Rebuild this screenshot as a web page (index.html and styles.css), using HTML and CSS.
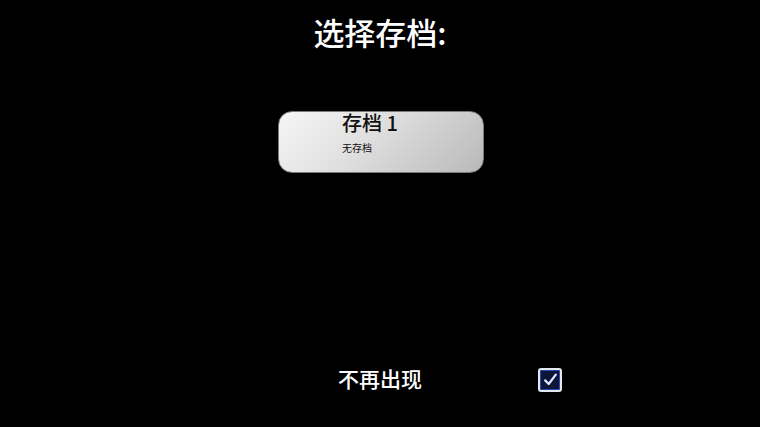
FILE: index.html
```html
<!DOCTYPE html>
<html lang="zh-CN">
<head>
<meta charset="utf-8">
<link rel="stylesheet" href="styles.css">
</head>
<body>
<main class="screen">
  <h1 class="title">选择存档:</h1>
  <div class="slot">
    <div class="slot-name">存档 1</div>
    <div class="slot-info">无存档</div>
  </div>
  <div class="spacer"></div>
  <label class="option">
    <span class="option-text">不再出现</span>
    <span class="checkbox">
      <svg viewBox="0 0 16 16" width="17" height="17">
        <path d="M3 8.8 L6.3 12.2 L13 3.4" fill="none" stroke="#dce8ff" stroke-width="2.1" stroke-linecap="round" stroke-linejoin="round"/>
      </svg>
    </span>
  </label>
</main>
</body>
</html>
```
FILE: styles.css
```css
html, body {
  margin: 0;
  padding: 0;
  background: #000;
}
.screen {
  width: 760px;
  height: 427px;
  display: flex;
  flex-direction: column;
  align-items: center;
  font-family: "Noto Sans CJK SC", "Noto Sans", sans-serif;
  color: #fff;
  box-sizing: border-box;
  padding-top: 12px;
}
.title {
  margin: 0;
  font-size: 31px;
  font-weight: 500;
  line-height: 40px;
  padding-left: 0;
}
.slot {
  margin-top: 59px;
  width: 206px;
  height: 62px;
  box-sizing: border-box;
  border: 1px solid #7a7a7a;
  border-radius: 14px;
  background: linear-gradient(135deg, #f6f6f6 0%, #dedede 45%, #b9b9b9 100%);
  padding-left: 63px;
  color: #111;
  margin-left: 2px;
}
.slot-name {
  font-size: 20px;
  font-weight: 500;
  line-height: 22px;
  margin-top: 0;
}
.slot-info {
  font-size: 10px;
  line-height: 12px;
  margin-top: 8px;
}
.spacer {
  flex: 1;
}
.option {
  align-self: flex-start;
  margin-left: 338px;
  margin-bottom: 35px;
  display: flex;
  align-items: center;
  gap: 116px;
}
.option-text {
  font-size: 21px;
  font-weight: 500;
  line-height: 28px;
  margin-top: -3px;
}
.checkbox {
  width: 24px;
  height: 24px;
  box-sizing: border-box;
  border: 2px solid #e6e6f0;
  border-radius: 3px;
  background: #0d1538;
  box-shadow: inset 0 0 0 1px #2a4aa8;
  display: flex;
  align-items: center;
  justify-content: center;
}
```
